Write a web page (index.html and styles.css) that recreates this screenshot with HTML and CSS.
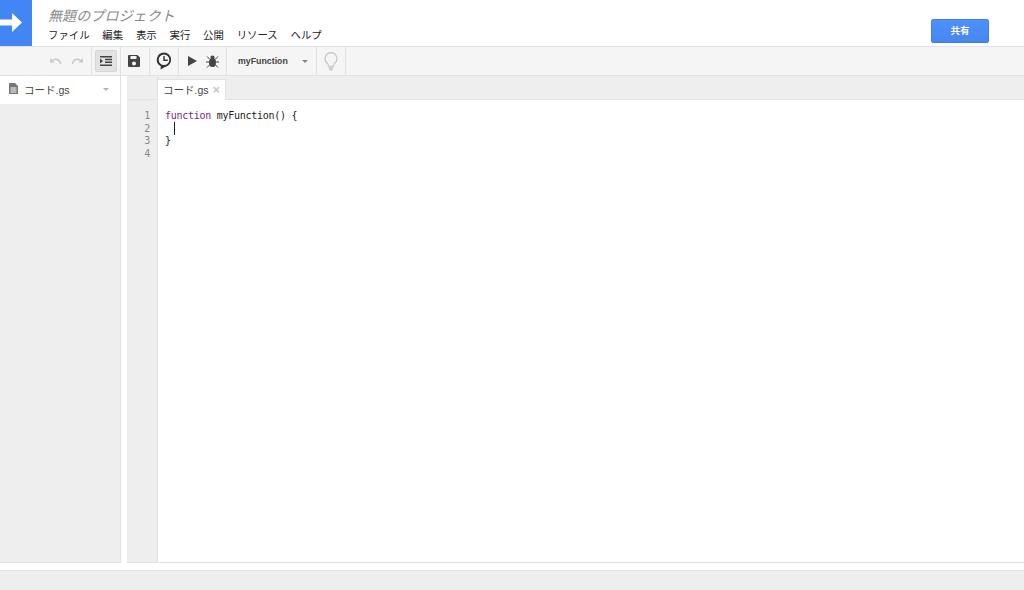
FILE: index.html
```html
<!DOCTYPE html>
<html lang="ja">
<head>
<meta charset="utf-8">
<title>無題のプロジェクト</title>
<link rel="stylesheet" href="styles.css">
</head>
<body>
<header class="header">
  <div class="logo">
    <svg width="32" height="46" viewBox="0 0 32 46"><path d="M0 19.500h12V13l10 9.500L12 32v-6.500H0z" fill="#fff"/></svg>
  </div>
  <div class="titles">
    <div class="title">無題のプロジェクト</div>
    <nav class="menu">
      <span>ファイル</span><span>編集</span><span>表示</span><span>実行</span><span>公開</span><span>リソース</span><span>ヘルプ</span>
    </nav>
  </div>
  <button class="share">共有</button>
</header>
<div class="toolbar">
  <div class="tgroup undo">
    <svg width="13" height="9" viewBox="0 0 14 10"><path d="M1 1v5h5L4.300 4.300C7 2.500 10.500 3.500 12 8l1.500-.6C12 2 7.500.3 3.200 3.200z" fill="#c8c8c8"/></svg>
    <svg width="13" height="9" viewBox="0 0 14 10"><path d="M13 1v5H8l1.700-1.700C7 2.500 3.500 3.500 2 8L.5 7.400C2 2 6.500.3 10.800 3.200z" fill="#c8c8c8"/></svg>
  </div>
  <div class="tgroup indent">
    <div class="pressed">
      <svg width="12" height="10" viewBox="0 0 12 10"><path d="M0 0h12v1.500H0zM5 2.800h7v1.500H5zM5 5.600h7v1.500H5zM0 8.500h12V10H0zM0 2.500 3 5 0 7.500z" fill="#444"/></svg>
    </div>
  </div>
  <div class="tgroup save">
    <svg width="12" height="12" viewBox="0 0 12 12"><path fill-rule="evenodd" d="M0 1a1 1 0 0 1 1-1h8.500L12 2.500V11a1 1 0 0 1-1 1H1a1 1 0 0 1-1-1zM2.500 1v3h6V1zM6 6.500a2 2 0 1 0 0 4 2 2 0 0 0 0-4z" fill="#444"/></svg>
  </div>
  <div class="tgroup clock">
    <svg width="16" height="18" viewBox="0 0 16 18"><path fill-rule="evenodd" d="M8 .5a7.300 7.300 0 0 1 1 14.500L4.500 17.500l.3-3.200A7.300 7.300 0 0 1 8 .5zm0 2a5.300 5.300 0 1 0 0 10.600A5.300 5.300 0 0 0 8 2.500z" fill="#333"/><path d="M7.300 4h1.400v3.600h3v1.400H7.300z" fill="#333"/></svg>
  </div>
  <div class="tgroup run">
    <svg width="9" height="10" viewBox="0 0 9 10"><path d="M0 0l9 5-9 5z" fill="#444"/></svg>
    <svg width="13" height="13" viewBox="0 0 13 13"><ellipse cx="6.500" cy="7.500" rx="3.500" ry="4.500" fill="#444"/><circle cx="6.500" cy="2.500" r="2" fill="#444"/><path d="M1 1.500l3 3M12 1.500l-3 3M0 7h13M1 12.500l3-3M12 12.500l-3-3" stroke="#444" fill="none"/></svg>
  </div>
  <div class="tgroup select">
    <span class="fn">myFunction</span>
    <span class="caret small"></span>
  </div>
  <div class="tgroup bulb">
    <svg width="14" height="19" viewBox="0 0 14 20"><path d="M7 .7a6.300 6.300 0 0 0-3.500 11.500c.6.500.8 1.500.8 2.800h5.400c0-1.300.2-2.300.8-2.800A6.300 6.300 0 0 0 7 .7z" fill="none" stroke="#c4c4c4" stroke-width="1.200"/><path d="M4.500 16h5v1.500h-5zM5.500 18h3v1.500h-3z" fill="#c4c4c4"/></svg>
  </div>
</div>
<main class="workspace">
  <aside class="sidebar">
    <div class="file">
      <svg width="9" height="11" viewBox="0 0 9 11"><path fill-rule="evenodd" d="M0 0h6l3 3v8H0zM1.500 4.500v1h6v-1zM1.500 6.500v1h6v-1zM1.500 8.500v1h6v-1z" fill="#777"/></svg>
      <span class="fname">コード.gs</span>
      <span class="caret"></span>
    </div>
  </aside>
  <div class="gap"></div>
  <section class="editor-area">
    <div class="tabs">
      <div class="tab-spacer"></div>
      <div class="tab"><span>コード.gs</span><span class="close">×</span></div>
    </div>
    <div class="editor">
      <div class="gutter">
        <div>1</div><div>2</div><div>3</div><div>4</div>
      </div>
      <div class="code">
        <div><span class="kw">function</span> myFunction() {</div>
        <div class="cursor-line"><span class="cursor"></span></div>
        <div>}</div>
        <div>&nbsp;</div>
      </div>
    </div>
  </section>
</main>
<footer class="status"></footer>
</body>
</html>
```

FILE: styles.css
```css
* { box-sizing: border-box; }
html, body { margin: 0; height: 100%; }
body {
  width: 1024px;
  height: 590px;
  overflow: hidden;
  display: flex;
  flex-direction: column;
  background: #fff;
  font-family: "Liberation Sans", "Noto Sans CJK JP", sans-serif;
  color: #222;
}
.header { height: 46px; display: flex; flex: none; position: relative; }
.logo { width: 32px; height: 46px; background: #4285f4; flex: none; }
.logo svg { display: block; }
.titles { margin-left: 16px; flex: 1; }
.title {
  font-size: 14px;
  font-style: italic;
  color: #8a8a8a;
  line-height: 20px;
  margin-top: 6px;
  letter-spacing: .1px;
}
.menu { display: flex; gap: 12.800px; font-size: 10.400px; line-height: 14px; margin-top: 3px; color: #222; }
.share {
  width: 58px; height: 24px;
  margin: 19px 35px 0 0;
  border: 1px solid #3f7fe8;
  border-radius: 2px;
  background: linear-gradient(#4d90fe, #4787ed);
  color: #fff;
  font: bold 9.500px "Liberation Sans", "Noto Sans CJK JP", sans-serif;
  padding: 0 0 2px;
}
.toolbar {
  height: 30px;
  flex: none;
  display: flex;
  background: #f5f5f5;
  border-top: 1px solid #e2e2e2;
  border-bottom: 1px solid #e2e2e2;
}
.tgroup { display: flex; align-items: center; height: 100%; border-right: 1px solid #e2e2e2; }
.undo { width: 92px; justify-content: flex-end; gap: 9px; padding-right: 7px; }
.indent { width: 29px; justify-content: center; }
.pressed {
  width: 22px; height: 22px;
  background: #e2e2e2;
  border: 1px solid #d6d6d6;
  border-radius: 2px;
  display: flex; align-items: center; justify-content: center;
}
.save { width: 29px; padding-left: 7px; }
.clock { width: 29px; justify-content: center; }
.run { width: 48px; gap: 9px; padding-left: 9px; }
.select { width: 90px; padding-left: 11px; }
.fn { font-size: 8.800px; font-weight: bold; color: #444; width: 64px; }
.caret {
  width: 0; height: 0;
  border-left: 3.500px solid transparent;
  border-right: 3.500px solid transparent;
  border-top: 3.500px solid #b4b4b4;
}
.caret.small { border-left-width: 3px; border-right-width: 3px; border-top-width: 3px; border-top-color: #888; }
.bulb { width: 29px; justify-content: center; }
.workspace { flex: 1; display: flex; min-height: 0; }
.sidebar { width: 121px; background: #eee; border-right: 1px solid #e2e2e2; border-bottom: 1px solid #e2e2e2; }
.file {
  height: 28px;
  background: #fff;
  display: flex;
  align-items: center;
  padding: 0 0 2px 9px;
  font-size: 10.500px;
  color: #444;
}
.file svg { margin-top: -1px; }
.fname { margin-left: 6px; width: 79px; }
.gap { width: 6px; flex: none; }
.editor-area { flex: 1; display: flex; flex-direction: column; min-width: 0; border-bottom: 1px solid #e2e2e2; }
.tabs { height: 24px; flex: none; display: flex; background: #eee; border-bottom: 1px solid #e2e2e2; }
.tab-spacer { width: 31px; border-right: 1px solid #e2e2e2; }
.tab {
  width: 68px;
  height: 21px;
  background: #fff;
  border-top: 1px solid #e2e2e2;
  border-right: 1px solid #e2e2e2;
  margin-top: 3px;
  padding: 0 0 2px 5px;
  font-size: 10.500px;
  color: #444;
  display: flex;
  align-items: center;
  gap: 4px;
}
.close { color: #c8c8c8; font-size: 13px; font-weight: bold; }
.editor { flex: 1; display: flex; font-family: "DejaVu Sans Mono", monospace; font-size: 10px; letter-spacing: -.27px; line-height: 12.700px; min-height: 0; }
.gutter {
  width: 31px;
  flex: none;
  background: #eee;
  border-right: 1px solid #e2e2e2;
  color: #888;
  text-align: right;
  padding: 10px 7px 0 0;
}
.code { padding: 10px 0 0 7px; color: #222; }
.kw { color: #7a1f8c; }
.cursor-line { position: relative; height: 12.700px; }
.cursor { position: absolute; left: 9px; top: -1px; width: 1px; height: 13px; background: #222; }
.status { height: 20px; flex: none; margin-top: 7px; background: #eee; border-top: 1px solid #e2e2e2; }
```
